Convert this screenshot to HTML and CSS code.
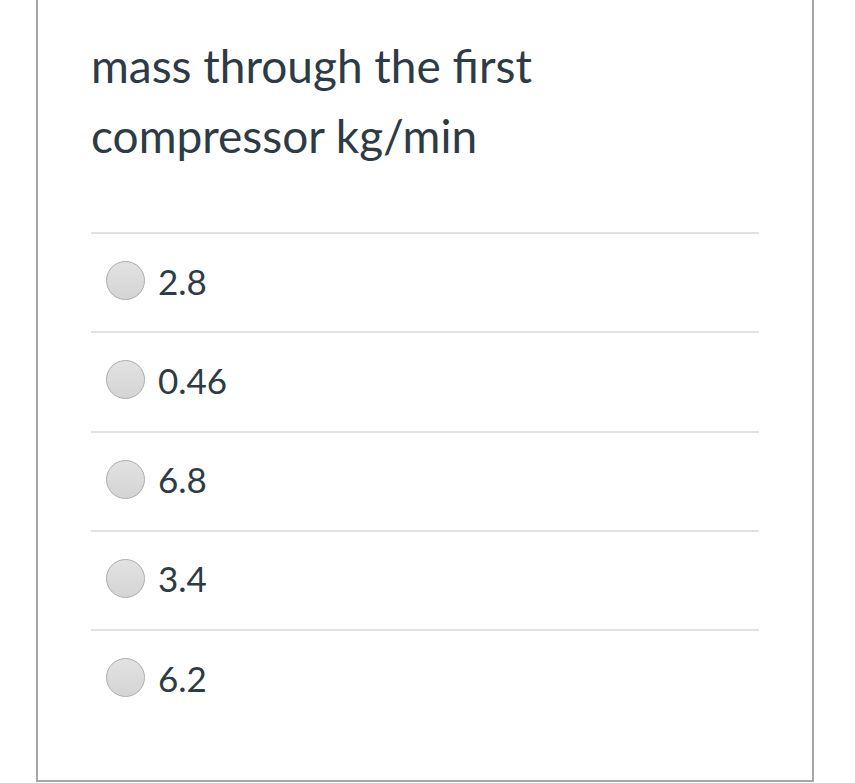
FILE: index.html
```html
<!DOCTYPE html>
<html>
<head>
<meta charset="utf-8">
<link rel="stylesheet" href="styles.css">
</head>
<body>
<div class="card">
  <div class="question">mass through the first compressor kg/min</div>
  <div class="answers">
    <label class="answer"><span class="radio"></span><span class="val">2.8</span></label>
    <label class="answer"><span class="radio"></span><span class="val">0.46</span></label>
    <label class="answer"><span class="radio"></span><span class="val">6.8</span></label>
    <label class="answer"><span class="radio"></span><span class="val">3.4</span></label>
    <label class="answer"><span class="radio"></span><span class="val">6.2</span></label>
  </div>
</div>
</body>
</html>
```
FILE: styles.css
```css
html, body {
  margin: 0;
  padding: 0;
  background: #fff;
}
body {
  font-family: Lato, "Open Sans", sans-serif;
  color: #2d3b45;
}
.card {
  box-sizing: border-box;
  margin-left: 36px;
  width: 778px;
  height: 782px;
  border: 2px solid #a8a8a8;
  border-top: none;
  padding: 31px 53px 0 53px;
}
.question {
  font-size: 46px;
  line-height: 70px;
  width: 520px;
}
.answers {
  margin-top: 61px;
}
.answer {
  box-sizing: border-box;
  display: flex;
  align-items: center;
  height: 99.25px;
  border-top: 2px solid #e2e2e2;
  padding: 0 0 4px 15px;
}
.radio {
  box-sizing: border-box;
  width: 39px;
  height: 39px;
  border-radius: 50%;
  border: 1px solid #acacac;
  background: linear-gradient(#e2e2e2, #d4d4d4);
  margin-right: 13px;
}
.val {
  font-size: 35px;
}
```
